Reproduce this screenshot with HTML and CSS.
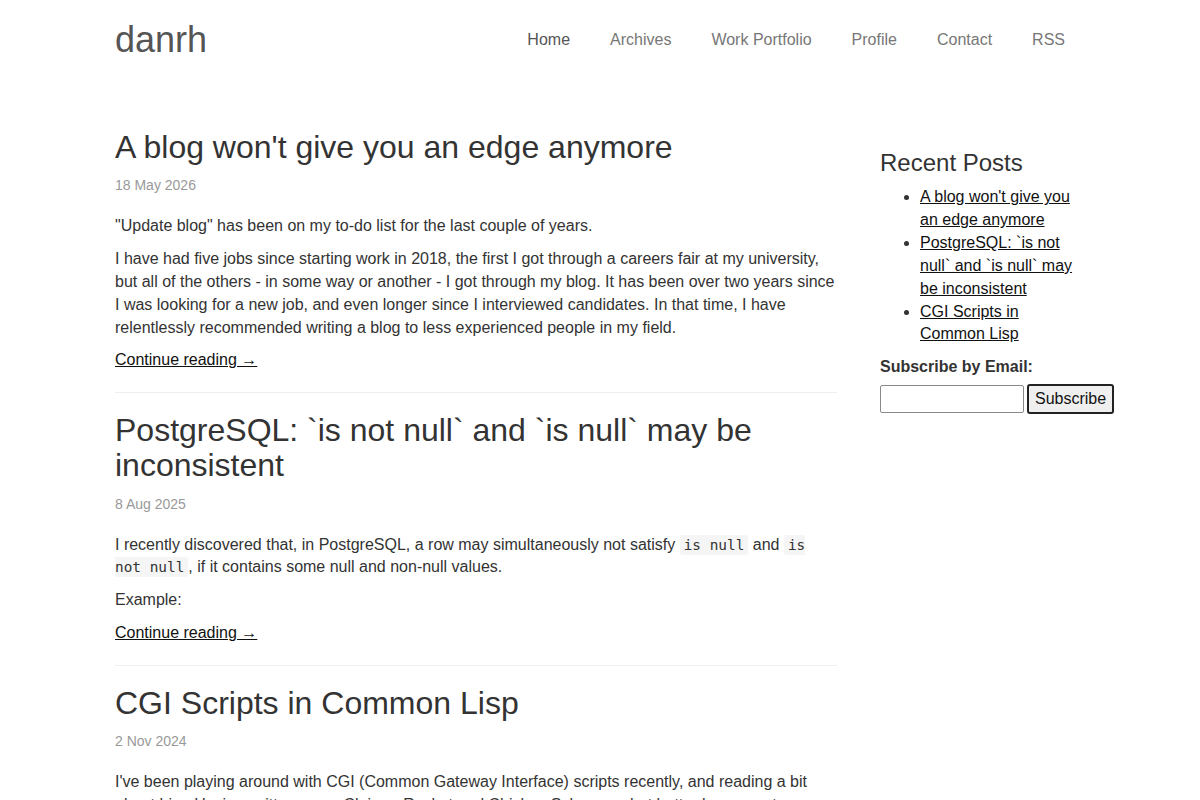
FILE: index.html
```html
<!DOCTYPE html>
<html lang="en">
<head>
  <meta charset="UTF-8">
  <meta name="viewport" content="width=device-width, initial-scale=1.0">
  <title>danrh</title>
  <link rel="stylesheet" href="styles.css">
</head>
<body>
  <header class="site-header">
    <a class="brand" href="#">danrh</a>
    <nav class="nav">
      <a class="active" href="#">Home</a>
      <a href="#">Archives</a>
      <a href="#">Work Portfolio</a>
      <a href="#">Profile</a>
      <a href="#">Contact</a>
      <a href="#">RSS</a>
    </nav>
  </header>

  <div class="page">
    <main class="posts">
      <article class="post">
        <h1>A blog won't give you an edge anymore</h1>
        <p class="date">18 May 2026</p>
        <p>"Update blog" has been on my to-do list for the last couple of years.</p>
        <p>I have had five jobs since starting work in 2018, the first I got through a careers fair at my university, but all of the others - in some way or another - I got through my blog. It has been over two years since I was looking for a new job, and even longer since I interviewed candidates. In that time, I have relentlessly recommended writing a blog to less experienced people in my field.</p>
        <p><a href="#">Continue reading &rarr;</a></p>
      </article>
      <hr>
      <article class="post">
        <h1>PostgreSQL: `is not null` and `is null` may be inconsistent</h1>
        <p class="date">8 Aug 2025</p>
        <p>I recently discovered that, in PostgreSQL, a row may simultaneously not satisfy <code>is null</code> and <code>is not null</code>, if it contains some null and non-null values.</p>
        <p>Example:</p>
        <p><a href="#">Continue reading &rarr;</a></p>
      </article>
      <hr>
      <article class="post">
        <h1>CGI Scripts in Common Lisp</h1>
        <p class="date">2 Nov 2024</p>
        <p>I've been playing around with CGI (Common Gateway Interface) scripts recently, and reading a bit about him. Having written some Clojure, Racket and Chicken Scheme, what better language to use than Common Lisp, I thought.</p>
      </article>
    </main>

    <aside class="sidebar">
      <h3>Recent Posts</h3>
      <ul>
        <li><a href="#">A blog won't give you an edge anymore</a></li>
        <li><a href="#">PostgreSQL: `is not null` and `is null` may be inconsistent</a></li>
        <li><a href="#">CGI Scripts in Common Lisp</a></li>
      </ul>
      <form class="subscribe">
        <label for="email">Subscribe by Email:</label>
        <div class="subscribe-row">
          <input type="text" id="email">
          <button type="button">Subscribe</button>
        </div>
      </form>
    </aside>
  </div>
</body>
</html>
```

FILE: styles.css
```css
body {
  margin: 0;
  padding: 0;
  font-family: "Liberation Sans", Arial, sans-serif;
  font-size: 16px;
  line-height: 1.42857;
  color: #333;
  background: #fff;
}

a {
  color: #111;
}

/* Header */
.site-header {
  width: 970px;
  height: 80px;
  margin: 0 auto;
  display: flex;
  align-items: center;
  justify-content: space-between;
}

.brand {
  font-size: 36px;
  color: #555;
  text-decoration: none;
  line-height: 1;
}

.nav {
  display: flex;
}

.nav a {
  padding: 0 20px;
  color: #777;
  text-decoration: none;
}

.nav a.active {
  color: #555;
}

/* Layout */
.page {
  width: 970px;
  margin: 0 auto;
  display: grid;
  grid-template-columns: 722px minmax(0, 1fr);
  column-gap: 43px;
  padding-top: 50px;
}

/* Posts */
.post h1 {
  font-size: 32px;
  font-weight: normal;
  line-height: 1.1;
  margin: 0 0 11px;
}

.post p {
  margin: 0 0 10px;
}

.post .date {
  font-size: 14px;
  color: #999;
  margin-bottom: 19px;
}

.post code {
  font-family: "DejaVu Sans Mono", monospace;
  font-size: 14.4px;
  line-height: 1;
  background: #f5f5f5;
  padding: 2px 4px;
  border-radius: 3px;
  color: #333;
}

.posts hr {
  border: 0;
  border-top: 1px solid #eee;
  margin: 20px 0;
}

/* Sidebar */
.sidebar h3 {
  font-size: 24px;
  font-weight: normal;
  line-height: 1.1;
  margin: 20px 0 10px;
}

.sidebar ul {
  margin: 0 0 10px;
  padding-left: 40px;
  padding-right: 10px;
}

.subscribe label {
  display: block;
  font-weight: bold;
  margin-bottom: 5px;
}

.subscribe-row {
  display: flex;
  align-items: center;
  gap: 3px;
}

.subscribe input {
  width: 144px;
  height: 28px;
  box-sizing: border-box;
  border: 1px solid #8a8a8a;
  border-radius: 2px;
  padding: 1px 4px;
  flex: none;
}

.subscribe button {
  flex: none;
  height: 30px;
  box-sizing: border-box;
  padding: 0 6px;
  font-family: inherit;
  font-size: 16px;
  color: #111;
  background: #efefef;
  border: 2px solid #222;
  border-radius: 3px;
}
```
